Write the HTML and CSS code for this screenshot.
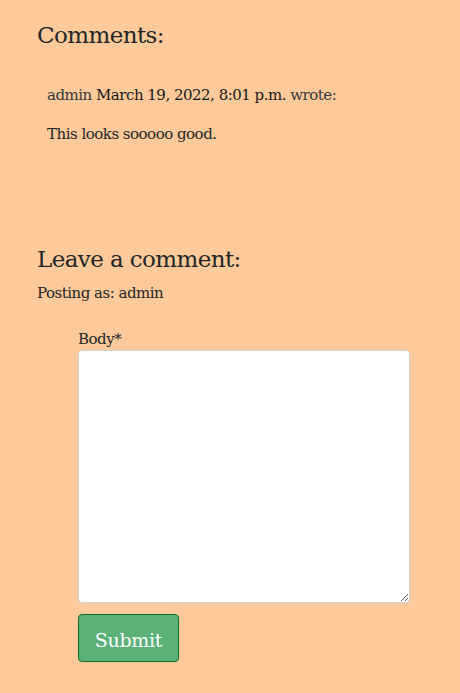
FILE: index.html
```html
<!DOCTYPE html>
<html lang="en">
<head>
<meta charset="utf-8">
<link rel="stylesheet" href="styles.css">
</head>
<body>
<main class="page">
  <section class="comments">
    <h3 class="heading">Comments:</h3>
    <div class="comment">
      <p class="meta"><span class="author">admin</span> <span class="date">March 19, 2022, 8:01 p.m.</span> <span class="author">wrote:</span></p>
      <p class="body">This looks sooooo good.</p>
    </div>
  </section>
  <section class="leave">
    <h3 class="heading">Leave a comment:</h3>
    <p class="posting">Posting as: admin</p>
    <form class="form">
      <label class="label" for="body">Body*</label>
      <textarea class="textarea" id="body"></textarea>
      <button class="submit" type="button">Submit</button>
    </form>
  </section>
</main>
</body>
</html>
```
FILE: styles.css
```css
html, body {
  margin: 0;
  padding: 0;
  background: #ffca99;
}
body {
  font-family: "DejaVu Serif", "Liberation Serif", serif;
  color: #212529;
  font-size: 15px;
  letter-spacing: -0.5px;
  line-height: 24px;
}
.page {
  padding: 21px 37px 0 37px;
}
.heading {
  font-size: 23px;
  letter-spacing: -0.6px;
  font-weight: 400;
  line-height: 28px;
  margin: 0;
}
.comment {
  padding: 34px 10px 0 10px;
}
.meta, .body, .posting {
  margin: 0;
}
.author {
  color: #34383c;
}
.date {
  color: #16191c;
}
.body {
  margin-top: 15px;
}
.leave {
  margin-top: 99px;
}
.posting {
  margin-top: 8px;
}
.form {
  display: flex;
  flex-direction: column;
  align-items: flex-start;
  padding: 23px 14px 0 41px;
}
.label {
  line-height: 22px;
}
.textarea {
  box-sizing: border-box;
  width: 332px;
  height: 253px;
  background: #fff;
  border: 1px solid #ced4da;
  border-radius: 4px;
  margin: 0;
  font: inherit;
}
.submit {
  margin-top: 11px;
  width: 101px;
  height: 48px;
  background: #5bb278;
  color: #fff;
  border: 1px solid #146c1b;
  border-radius: 4px;
  font-family: inherit;
  font-size: 19px;
  letter-spacing: -0.3px;
  padding: 3px 0 0 0;
}
```
